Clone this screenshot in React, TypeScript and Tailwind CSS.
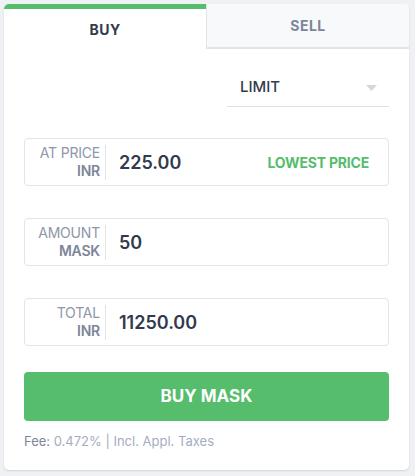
import React from "react";

function Field({ top, bottom, value, right }: { top: string; bottom: string; value: string; right?: string }) {
  return (
    <div className="flex h-[48px] items-center rounded-[4px] border border-[#e2e4ea] bg-white">
      <div className="flex h-[35px] w-[81px] flex-col items-end justify-center border-r border-[#e2e4ea] pr-[5px] leading-[18px]">
        <span className="text-[14px] tracking-[-0.2px] text-[#8e96a8]">{top}</span>
        <span className="text-[14px] font-semibold tracking-[-0.2px] text-[#7c8599]">{bottom}</span>
      </div>
      <div className="ml-[13px] flex-1 text-[18px] font-semibold text-[#333a4d]">{value}</div>
      {right && <div className="mr-[19px] text-[14px] font-bold tracking-[-0.2px] text-[#55bd6c]">{right}</div>}
    </div>
  );
}

export default function App() {
  return (
    <div className="h-[476px] w-[415px] bg-[#eff1f5] p-[4px] pr-[6px]" style={{ fontFamily: "Inter, 'Noto Sans', sans-serif" }}>
      <div className="h-[466px] overflow-hidden rounded-[5px] bg-white shadow-[0_1px_2px_rgba(0,0,0,0.12)]">
        <div className="flex h-[45px]">
          <div className="flex flex-1 flex-col">
            <div className="h-[5px] bg-[#55bd6c]" />
            <div className="flex flex-1 items-center justify-center text-[14px] font-bold tracking-[0.5px] text-[#333a4d]">BUY</div>
          </div>
          <div className="flex flex-1 items-center justify-center border-b-2 border-l border-[#e2e4ea] bg-[#f8f9fb] text-[14px] font-bold tracking-[0.5px] text-[#7c8599]">SELL</div>
        </div>
        <div className="px-[20px]">
          <div className="flex justify-end">
            <div className="mt-[20px] flex h-[38px] w-[162px] items-center justify-between border-b border-[#dfe1e6] pl-[13px] pr-[12px]">
              <span className="text-[15px] font-medium text-[#333a4d]">LIMIT</span>
              <svg width="11" height="6" viewBox="0 0 11 6"><path d="M0 0 L11 0 L5.5 6 Z" fill="#d4d7de" /></svg>
            </div>
          </div>
          <div className="mt-[31px] flex flex-col gap-[32px]">
            <Field top="AT PRICE" bottom="INR" value="225.00" right="LOWEST PRICE" />
            <Field top="AMOUNT" bottom="MASK" value="50" />
            <Field top="TOTAL" bottom="INR" value="11250.00" />
          </div>
          <button className="mt-[26px] flex h-[49px] w-full items-center justify-center rounded-[4px] bg-[#55bd6c] text-[17px] font-bold text-white">BUY MASK</button>
          <div className="mt-[11px] text-[13px] text-[#a4adc0]">
            <span className="text-[#7c8599]">Fee:</span> 0.472% | Incl. Appl. Taxes
          </div>
        </div>
      </div>
    </div>
  );
}
